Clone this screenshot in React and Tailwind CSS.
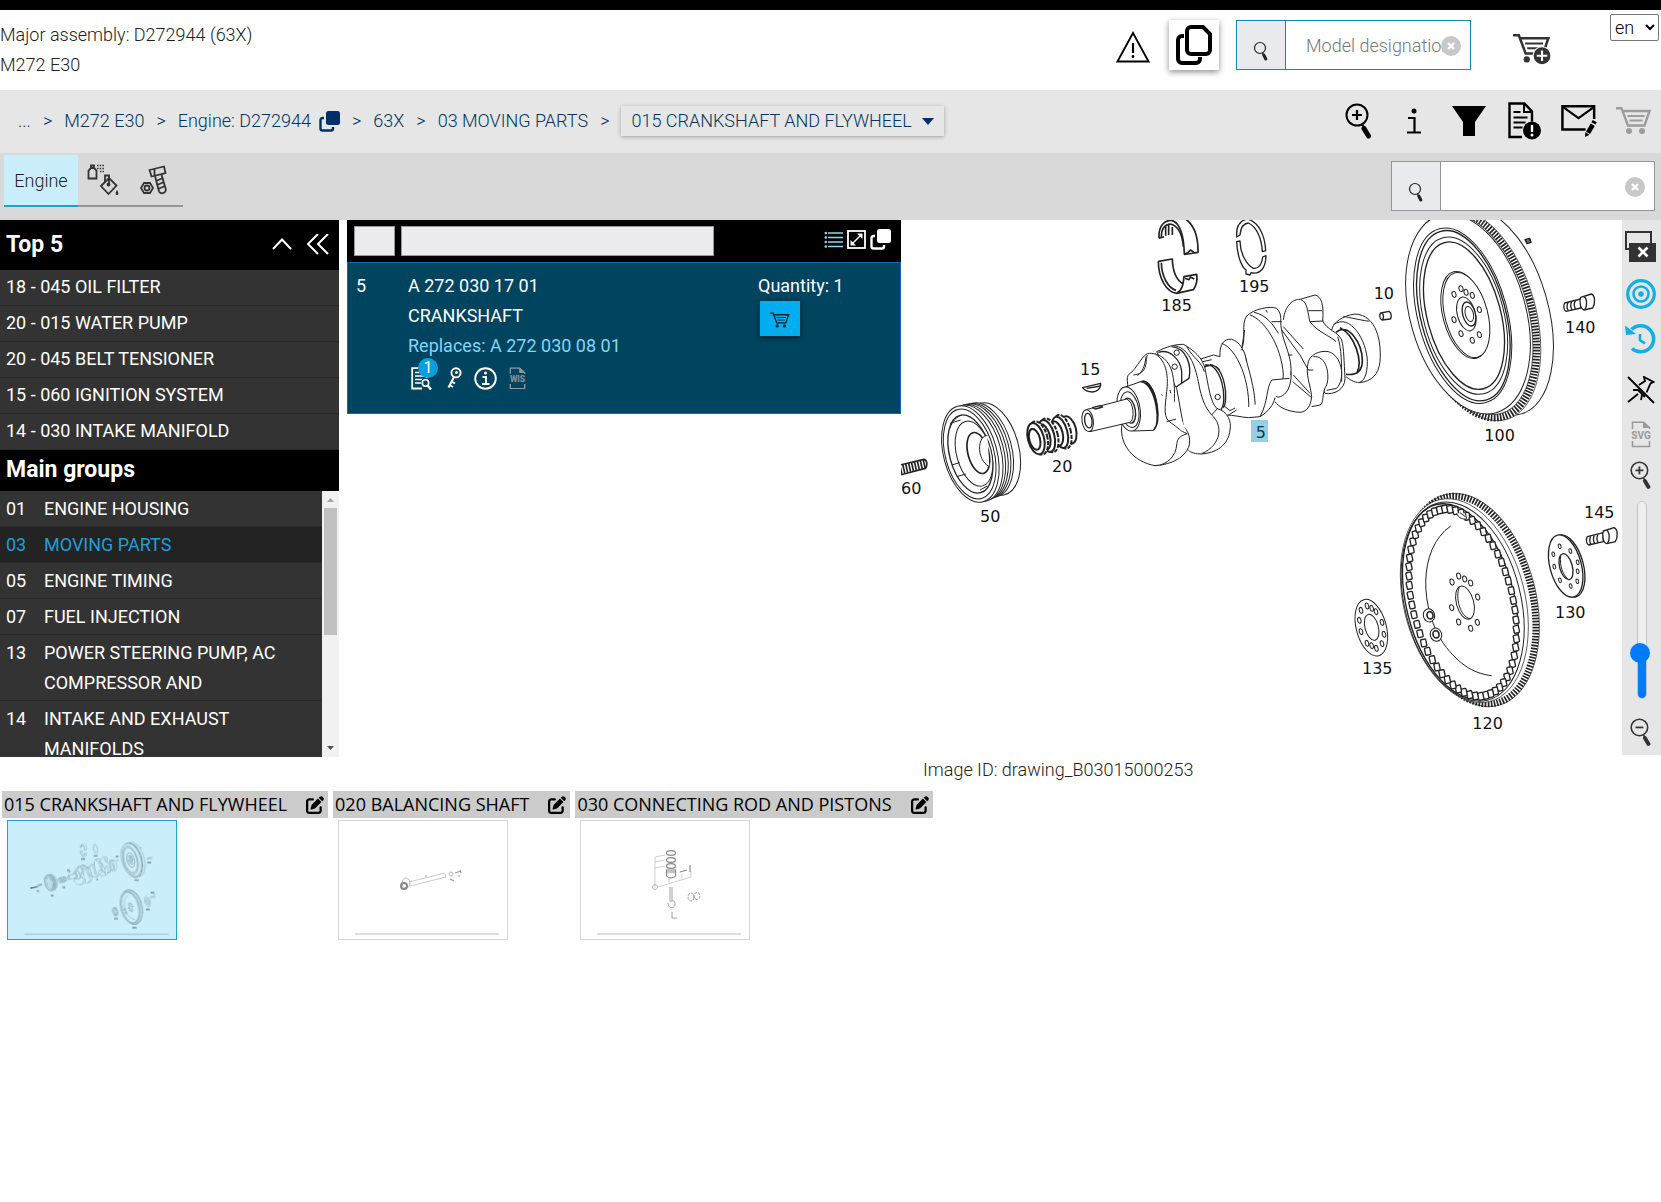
import React, { useState } from "react";
import { FaPenToSquare } from "react-icons/fa6";

const topFive = [
  "18 - 045 OIL FILTER",
  "20 - 015 WATER PUMP",
  "20 - 045 BELT TENSIONER",
  "15 - 060 IGNITION SYSTEM",
  "14 - 030 INTAKE MANIFOLD",
];

const mainGroups = [
  { code: "01", name: "ENGINE HOUSING" },
  { code: "03", name: "MOVING PARTS" },
  { code: "05", name: "ENGINE TIMING" },
  { code: "07", name: "FUEL INJECTION" },
  { code: "13", name: "POWER STEERING PUMP, AC COMPRESSOR AND" },
  { code: "14", name: "INTAKE AND EXHAUST MANIFOLDS" },
];

const callouts = [
  { no: "185", x: 781, y: 273 },
  { no: "195", x: 1014, y: 216 },
  { no: "15", x: 537, y: 464 },
  { no: "20", x: 453, y: 756 },
  { no: "60", x: 0, y: 823 },
  { no: "50", x: 237, y: 907 },
  { no: "10", x: 1418, y: 236 },
  { no: "140", x: 1992, y: 338 },
  { no: "100", x: 1750, y: 663 },
  { no: "145", x: 2049, y: 893 },
  { no: "130", x: 1962, y: 1195 },
  { no: "135", x: 1383, y: 1361 },
  { no: "120", x: 1714, y: 1526 },
];

/* ---------- Icons ---------- */

const SearchIcon = () => (
  <svg width="16" height="20" viewBox="0 0 16 20" fill="none" stroke="#222">
    <circle cx="7" cy="7" r="5.5" strokeWidth="1.2" />
    <path d="M9.5 12l1 2" strokeWidth="1.2" />
    <path d="M10.8 14l2 4" strokeWidth="3" strokeLinecap="round" />
  </svg>
);

const ZoomIcon = ({ minus, className }) => (
  <svg className={className} viewBox="0 0 28 36" fill="none" stroke="currentColor">
    <circle cx="12" cy="12" r="10.5" strokeWidth="2" />
    <path d={minus ? "M7 12h10" : "M7 12h10M12 7v10"} strokeWidth="2.2" />
    <path d="M17 21l2 4" strokeWidth="2" />
    <path d="M19 25.500l4.500 7.500" strokeWidth="5" strokeLinecap="round" />
  </svg>
);

const WarningIcon = () => (
  <svg width="34" height="32" viewBox="0 0 34 32" fill="none" stroke="#000">
    <path d="M17 2L32.500 30.500H1.500Z" strokeWidth="1.8" />
    <path d="M17 12v10" strokeWidth="2.2" />
    <circle cx="17" cy="25.500" r="1.400" fill="#000" stroke="none" />
  </svg>
);

const PagesIcon = () => (
  <svg width="38" height="42" viewBox="0 0 38 42" fill="none" stroke="#000" strokeWidth="4">
    <path d="M16 3h12l7 7v16a4 4 0 0 1-4 4H16a4 4 0 0 1-4-4V7a4 4 0 0 1 4-4z" />
    <path d="M9 12H7a4 4 0 0 0-4 4v19a4 4 0 0 0 4 4h14a4 4 0 0 0 4-4v-2" />
  </svg>
);

const CloneIcon = () => (
  <svg width="21" height="21" viewBox="0 0 21 21" fill="none">
    <rect x="7" y="0" width="14" height="14" rx="2.500" fill="currentColor" />
    <path
      d="M5 7H3.500a2 2 0 0 0-2 2v8.500a2 2 0 0 0 2 2H12a2 2 0 0 0 2-2V16"
      stroke="currentColor"
      strokeWidth="2.400"
    />
  </svg>
);

const CartIcon = ({ className, children }) => (
  <svg className={className} viewBox="0 0 36 30" fill="none" stroke="currentColor">
    <path d="M0 2.200h5.500L12 19.500h16.500L33.500 5H7" strokeWidth="2.400" />
    <path d="M11.500 10h17M13.500 14.500h13" strokeWidth="2" />
    <circle cx="13" cy="25" r="3" fill="currentColor" stroke="none" />
    <circle cx="26" cy="25" r="3" fill="currentColor" stroke="none" />
    {children}
  </svg>
);

const FunnelIcon = () => (
  <svg width="34" height="30" viewBox="0 0 34 30">
    <path d="M0 0h34L23 16v14H11V16z" fill="#000" />
  </svg>
);

const DocAlertIcon = () => (
  <svg width="34" height="38" viewBox="0 0 34 38" fill="none" stroke="#000">
    <path d="M14 35H1.500V1.500h15l7.500 8v10" strokeWidth="2.400" />
    <path d="M16 1.500V10h8" strokeWidth="2" />
    <path d="M5.500 10h7M5.500 15.500h14M5.500 20.500h12M5.500 25.500h9" strokeWidth="2" />
    <circle cx="24" cy="28.500" r="9" fill="#000" stroke="none" />
    <path d="M24 23v7" stroke="#fff" strokeWidth="2.400" />
    <circle cx="24" cy="33" r="1.500" fill="#fff" stroke="none" />
  </svg>
);

const MailEditIcon = () => (
  <svg width="38" height="34" viewBox="0 0 38 34" fill="none" stroke="#000">
    <path d="M26 26H1.500V1.500h33.500V15" strokeWidth="2.600" />
    <path d="M2 2l16.500 12L35 2" strokeWidth="2.200" />
    <path d="M28.500 29.500l5-8.500" strokeWidth="5" />
    <path d="M34.300 19.500l1.300-2.300" strokeWidth="5" />
    <path d="M25.500 29l4.500 2.500-4.500 2.500z" fill="#000" stroke="none" />
  </svg>
);

const PaintIcon = () => (
  <svg width="32" height="32" viewBox="0 0 32 32" fill="none" stroke="#333" strokeWidth="1.800">
    <path d="M1.500 14.500V6.500L4 4h3l2.500 2.500v8z" />
    <path d="M4 4V1.500h3V4" />
    <path d="M10 1.500h7M10 4.500h7M13 7.500h4" strokeDasharray="1.500 1.200" strokeWidth="1.500" />
    <path d="M14 22l8-8 7.500 7.500-8 8.500z" />
    <path d="M18 18.500v-7h4v10" />
    <circle cx="21.500" cy="20.500" r="1" fill="#333" />
    <path d="M30 26c-2 3-1.500 5 0 5s2-2 0-5z" fill="#333" stroke="none" />
  </svg>
);

const BoltIcon = () => (
  <svg width="28" height="30" viewBox="0 0 28 30" fill="none" stroke="#333" strokeWidth="1.800">
    <path d="M4 18h6l3 5-3 5H4l-3-5z" />
    <circle cx="7" cy="23" r="2.500" />
    <path d="M9.500 5L24 1.500 25.500 8 11.500 11.500z" />
    <path d="M14.500 4v6M15 11l4 15.500M21.500 9.500l4.500 15.500" />
    <path d="M16 16l7-3M17 20l7-3M18 24l7-3M19 26.500c2 3 6 2 7-1.500" />
  </svg>
);

const ListIcon = () => (
  <svg width="19" height="18" viewBox="0 0 19 18" stroke="#8fd8ef" fill="#8fd8ef">
    {[2, 6.5, 11, 15.5].map((y) => (
      <g key={y}>
        <circle cx="1.800" cy={y} r="1.300" stroke="none" />
        <path d={`M4 ${y}h15`} strokeWidth="1.500" />
      </g>
    ))}
  </svg>
);

const ExpandIcon = () => (
  <svg width="19" height="19" viewBox="0 0 19 19" fill="none" stroke="#fff">
    <rect x="1" y="1" width="17" height="17" strokeWidth="1.800" />
    <path d="M5 14l9-9" strokeWidth="1.500" />
    <path d="M10 3.500h5.500V9zM3.500 10v5.500H9z" fill="#fff" stroke="none" />
  </svg>
);

const NoteSearchIcon = () => (
  <svg width="21" height="23" viewBox="0 0 21 23" fill="none" stroke="#fff">
    <path d="M11 21.500H1.200V1.200h14.600v10" strokeWidth="1.800" />
    <path d="M4 5.500h9M4 9h9M4 12.500h7M4 16h6" strokeWidth="1.500" />
    <circle cx="14.500" cy="16" r="3.200" strokeWidth="1.600" />
    <path d="M16.500 18.500l3.500 4" strokeWidth="2.400" />
  </svg>
);

const KeyIcon = () => (
  <svg width="16" height="22" viewBox="0 0 16 22" fill="none" stroke="#fff">
    <circle cx="10" cy="5.800" r="4.600" strokeWidth="1.900" />
    <circle cx="10.500" cy="5.500" r="1.500" fill="#fff" stroke="none" />
    <path d="M8 10L2.500 20.500M5.500 14.500l3.500 2M3.500 18l3.500 2" strokeWidth="2" />
  </svg>
);

const InfoIcon = () => (
  <svg width="23" height="23" viewBox="0 0 23 23" fill="none" stroke="#fff">
    <circle cx="11.500" cy="11.500" r="10.300" strokeWidth="1.900" />
    <path d="M8.500 10h3.500v6.500M8 17h7.500" strokeWidth="1.900" />
    <circle cx="11.500" cy="6" r="1.500" fill="#fff" stroke="none" />
  </svg>
);

const FileTagIcon = ({ tag, className }) => (
  <svg className={className} viewBox="0 0 20 27" fill="none" stroke="currentColor">
    <path d="M1.500 8V1.200h11l6 5.500V8M1.500 20v5.500h17V20" strokeWidth="1.500" />
    <path d="M12.500 1.500v5h5.500z" fill="currentColor" strokeWidth="1" />
    <text
      x="10"
      y="18"
      fontSize="10"
      fontWeight="700"
      textAnchor="middle"
      fill="currentColor"
      stroke="none"
    >
      {tag}
    </text>
  </svg>
);

const CloseWindowIcon = () => (
  <svg width="31" height="31" viewBox="0 0 31 31" fill="none">
    <rect x="1" y="1" width="25" height="17" stroke="#333" strokeWidth="2" />
    <rect x="4" y="12" width="27" height="19" fill="#333" />
    <path d="M13.500 16.500l9 9M22.500 16.500l-9 9" stroke="#fff" strokeWidth="2.600" />
  </svg>
);

const TargetIcon = () => (
  <svg width="30" height="30" viewBox="0 0 30 30" fill="none" stroke="#12aee8">
    <circle cx="15" cy="15" r="13.300" strokeWidth="3.200" />
    <circle cx="15" cy="15" r="7.500" strokeWidth="2.600" />
    <circle cx="15" cy="15" r="2.800" fill="#12aee8" stroke="none" />
  </svg>
);

const HistoryIcon = () => (
  <svg width="31" height="31" viewBox="0 0 31 31" fill="none" stroke="#12aee8">
    <path d="M6.500 6.500A13 13 0 1 1 7 25.500" strokeWidth="3.600" />
    <path d="M0 2.500L1 12l10-1z" fill="#12aee8" stroke="none" />
    <path d="M15 11v6l5 3.500" strokeWidth="2.600" />
  </svg>
);

const UnpinIcon = () => (
  <svg width="28" height="28" viewBox="0 0 28 28" fill="none" stroke="#000" strokeWidth="1.800">
    <path d="M1 1l26 26M1 26l10-8M6 14h5l7 7M14 24l1-5M12 9l6-4-1-4 9.500 5-3 1.500-4 9" />
  </svg>
);

/* ---------- Exploded view ---------- */

// Places small shapes around a tilted ellipse
const around = (count, cx, cy, rx, ry, tilt) =>
  Array.from({ length: count }, (_, i) => {
    const t = (i / count) * Math.PI * 2;
    const r = (tilt * Math.PI) / 180;
    const ex = rx * Math.cos(t);
    const ey = ry * Math.sin(t);
    return {
      x: Math.round(cx + ex * Math.cos(r) - ey * Math.sin(r)),
      y: Math.round(cy + ex * Math.sin(r) + ey * Math.cos(r)),
    };
  });

const Oval = ({ cx, cy, rx, ry, tilt = -15, ...rest }) => (
  <ellipse cx={cx} cy={cy} rx={rx} ry={ry} transform={`rotate(${tilt} ${cx} ${cy})`} {...rest} />
);

const Holes = ({ points, rx = 6, ry = 9 }) =>
  points.map(([x, y]) => <Oval key={`${x}-${y}`} cx={x} cy={y} rx={rx} ry={ry} />);

const Bolt = ({ x, y }) => (
  <g transform={`translate(${x} ${y})`} strokeWidth="4">
    <path d="M4 27L52 15V42L8 52C0 48 0 34 4 27z" />
    <path d="M14 26c-4 8-4 16 1 24M25 23c-4 8-4 16 1 24M36 20c-4 8-4 18 1 25" />
    <path d="M52 10L84 0c12 4 12 30 4 42L62 48C50 44 48 20 52 10z" />
    <path d="M62 8c10 6 10 30 2 40" />
  </g>
);

const CrankParts = () => (
  <g transform="translate(-3 -15)">
    {/* bearing shells */}
    <g strokeWidth="5">
      <path d="M777 70C775 30 795 15 815 16C845 25 852 75 853 118L894 112C895 60 880 25 850 8" />
      <path d="M784 66C784 40 795 28 812 27C840 35 848 70 850 95M777 70l15-5M797 62V32M806 60V30M817 60V36M853 118l12-6 6-7 10 6" />
      <path d="M775 139l42-7C818 165 828 195 850 207M775 139C775 190 800 232 830 235L880 224C890 210 893 195 890 178L852 185C850 205 848 225 830 235" />
      <path d="M784 143C785 185 805 220 828 226M855 190l12 4 4-8 12 6" />
    </g>
    {/* thrust washer */}
    <g strokeWidth="4">
      <path d="M1010 66C1008 35 1020 16 1042 12C1075 20 1095 60 1097 107l-10 3C1085 70 1070 35 1045 24C1030 25 1022 40 1020 60z" />
      <path d="M1010 80C1012 125 1025 155 1038 165v12l12 3 3-7C1080 180 1097 160 1098 122l-10 4C1085 150 1075 162 1060 160C1040 150 1020 115 1020 78z" />
    </g>
    {/* woodruff key */}
    <path d="M548 518L602 505C603 522 590 530 577 531C562 531 553 525 548 518zM560 520l42-7" strokeWidth="4" />
    {/* stud */}
    <path d="M0 750L72 733C82 735 83 752 76 760L0 780" strokeWidth="5" />
    <path d="M0 764L78 746" strokeWidth="26" strokeDasharray="5 4" />
    {/* belt pulley */}
    <g>
      <Oval cx={277} cy={702} rx={79} ry={142} />
      <Oval cx={253} cy={705} rx={82} ry={145} />
      <Oval cx={245} cy={707} rx={82} ry={145} />
      <Oval cx={237} cy={709} rx={82} ry={146} />
      <Oval cx={229} cy={712} rx={82} ry={147} />
      <Oval cx={221} cy={715} rx={82} ry={148} />
      <Oval cx={211} cy={717} rx={80} ry={148} />
      <Oval cx={209} cy={717} rx={73} ry={138} />
      <Oval cx={211} cy={717} rx={62} ry={120} strokeWidth="4" />
      <Oval cx={222} cy={716} rx={52} ry={100} />
      <Oval cx={235} cy={714} rx={31} ry={63} strokeWidth="5" />
      <path d="M262 662C232 660 228 735 268 755" />
      <path d="M150 625l32-10M155 750l24-7M170 785l28-8M240 825l22-12M150 640C155 620 170 605 186 600" />
    </g>
    {/* chain sprocket */}
    <g strokeWidth="6">
      <Oval cx={506} cy={645} rx={22} ry={42} />
      <Oval cx={488} cy={650} rx={24} ry={52} strokeDasharray="12 4" />
      <Oval cx={480} cy={652} rx={22} ry={48} />
      <Oval cx={468} cy={656} rx={20} ry={38} />
      <Oval cx={448} cy={661} rx={25} ry={52} strokeDasharray="12 4" />
      <Oval cx={440} cy={663} rx={23} ry={49} />
      <Oval cx={430} cy={666} rx={20} ry={40} />
      <Oval cx={416} cy={669} rx={26} ry={51} strokeDasharray="12 4" />
      <Oval cx={408} cy={671} rx={24} ry={48} />
      <Oval cx={404} cy={673} rx={16} ry={32} />
    </g>
    {/* crankshaft, webs from the rear to the nose */}
    <g>
      <path d="M1295 345C1300 320 1330 302 1365 297C1430 300 1445 380 1440 440C1435 480 1415 498 1380 503C1360 503 1345 490 1338 485" />
      <path d="M1300 330C1350 290 1402 380 1402 440C1402 480 1392 500 1375 503M1330 304C1370 312 1405 320 1408 318" />
      <path d="M1308 352C1345 320 1386 385 1387 435C1387 465 1375 482 1338 478M1320 338C1365 360 1390 440 1370 475" strokeWidth="5" />
      <path d="M1150 315C1155 270 1180 252 1200 253L1245 240C1265 245 1272 270 1268 318C1280 345 1315 350 1325 375C1332 400 1332 440 1335 490C1335 525 1300 540 1275 535L1270 525" />
      <path d="M1203 254C1225 262 1223 300 1230 320C1250 350 1295 365 1308 380M1225 287h42M1230 320l40-2M1313 365C1325 400 1325 450 1325 500" />
      <path d="M1225 440C1230 420 1260 405 1285 410C1325 420 1338 490 1310 520L1280 526M1240 425C1280 420 1290 480 1280 510C1265 530 1272 570 1260 570L1235 575" />
      <path d="M1225 440C1215 480 1232 510 1235 545C1232 575 1220 590 1200 592C1160 590 1135 575 1125 560M1145 345L1200 420L1225 465h15M1150 335L1210 402M1180 480L1230 535M1178 500L1235 548" />
      <path d="M1025 403C1040 365 1022 330 1040 303C1070 295 1125 340 1150 410C1178 460 1178 490 1165 522C1150 550 1128 550 1125 540" />
      <path d="M1040 303C1060 282 1110 272 1130 280C1150 300 1138 320 1145 345C1148 380 1180 430 1172 480M1050 300C1090 312 1145 390 1150 480C1148 515 1135 525 1125 535" />
      <path d="M1062 292C1100 300 1120 330 1135 355M1098 285l4 8M1115 320h30M1165 420h12M1034 345l-8 50" />
      <path d="M960 425C958 390 970 370 995 373C1020 380 1032 405 1040 440C1060 510 1070 560 1064 605M965 385C1010 400 1055 500 1045 606" />
      <path d="M1022 405C1030 400 1035 415 1040 440M978 600C1000 600 1020 606 1045 608L1080 605C1105 590 1120 570 1125 548M1080 605C1105 560 1098 520 1115 495L1168 490" />
      <path d="M896 434L940 420L960 425M900 442l35-8M975 575l15 12 15-8M985 600l25-15" />
      <path d="M915 450C965 440 985 560 962 585M930 448C978 455 985 560 970 578M895 470C920 445 950 445 960 470" strokeWidth="4" />
      <circle cx="953" cy="546" r="8" />
      <path d="M850 388C882 405 908 430 915 460C925 510 930 560 950 580C985 590 995 620 990 645C985 690 950 715 900 717C880 716 868 710 863 703L830 520L770 410C800 395 825 388 850 388z" />
      <path d="M820 392C865 395 885 450 895 500C905 555 915 575 935 600C970 630 965 690 905 716M860 395C880 430 905 440 913 470M935 600l18-20" />
      <path d="M775 412C810 400 842 435 845 470V503M815 395C860 400 875 450 867 490L828 516" strokeWidth="4" />
      <circle cx="830" cy="413" r="8" />
      <circle cx="824" cy="455" r="8" />
      <path d="M683 508C678 470 690 482 705 460C730 425 735 413 755 415C795 420 815 450 820 490C828 530 818 570 828 612C850 635 874 648 868 690C855 735 800 750 765 752C700 740 660 690 665 635z" />
      <path d="M765 416C803 440 805 490 800 530C795 580 788 610 815 625C850 650 835 645 862 656M700 480C745 475 735 445 742 420M712 482C735 465 735 440 738 425M862 656C830 665 832 680 830 690C828 720 805 750 765 752M800 620l28-8M785 538l2 4M810 525l2 10" />
      <Oval cx={738} cy={572} rx={32} ry={74} tilt={-8} strokeWidth="5" />
      <path d="M665 520L722 500C770 505 785 640 758 646L700 648z" />
      <path d="M722 500C770 505 785 640 758 646M735 503C775 520 785 630 762 640" strokeWidth="4" />
      <Oval cx={686} cy={582} rx={34} ry={67} tilt={-10} />
      <Oval cx={689} cy={584} rx={27} ry={54} tilt={-10} />
      <Oval cx={688} cy={587} rx={18} ry={38} tilt={-10} strokeWidth="4" />
      <path d="M558 584L680 552C702 560 705 615 690 622L570 650z" />
      <Oval cx={563} cy={617} rx={17} ry={33} tilt={-8} />
      <Oval cx={565} cy={617} rx={11} ry={22} tilt={-8} strokeWidth="4" />
      <path d="M578 578l22-6 8 4-22 6z" strokeWidth="4" />
    </g>
    {/* dowel and bolts */}
    <path d="M1442 294l25-5c8 4 8 18 4 23l-25 3c-8-3-8-16-4-21zM1446 294c6 5 6 16 0 21" strokeWidth="4" />
    <Bolt x={1990} y={237} />
    <Bolt x={2058} y={938} />
    {/* flywheel with ring gear */}
    <g>
      <Oval cx={1776} cy={289} rx={168} ry={320} tilt={-16} />
      <path d="M1875 74l14-4 4 12-12 4zM1881 72v12M1887 71v12" strokeWidth="4" />
      <Oval cx={1730} cy={300} rx={177} ry={326} tilt={-16} strokeWidth="2" />
      <Oval cx={1723} cy={300} rx={170} ry={316} tilt={-16} strokeWidth="24" strokeDasharray="5 4" />
      <Oval cx={1719} cy={299} rx={165} ry={308} tilt={-16} strokeWidth="2" />
      <Oval cx={1704} cy={297} rx={173} ry={308} tilt={-16} />
      <Oval cx={1688} cy={302} rx={134} ry={270} />
      <Oval cx={1690} cy={302} rx={127} ry={262} strokeWidth="4" />
      <Oval cx={1691} cy={302} rx={120} ry={242} />
      <Oval cx={1692} cy={302} rx={110} ry={227} strokeWidth="4" />
      <Oval cx={1695} cy={300} rx={66} ry={134} />
      <Oval cx={1699} cy={300} rx={64} ry={131} />
      <Oval cx={1699} cy={297} rx={27} ry={52} />
      <Oval cx={1707} cy={297} rx={19} ry={37} strokeWidth="4" />
      <Oval cx={1708} cy={297} rx={12} ry={23} />
      <Holes
        points={[
          [1662, 238],
          [1683, 221],
          [1698, 232],
          [1717, 241],
          [1738, 284],
          [1662, 314],
          [1683, 356],
          [1717, 376],
          [1738, 359],
        ]}
      />
    </g>
    {/* drive plate */}
    <g transform="translate(1200 765)">
      <Oval cx={516} cy={390} rx={192} ry={326} tilt={-14} strokeWidth="2" />
      <Oval cx={513} cy={390} rx={184} ry={318} tilt={-14} strokeWidth="20" strokeDasharray="5 4" />
      <Oval cx={493} cy={392} rx={182} ry={312} tilt={-14} strokeWidth="2" />
      <Oval cx={488} cy={395} rx={174} ry={305} tilt={-14} />
      <Oval cx={481} cy={395} rx={162} ry={300} tilt={-14} strokeWidth="4" />
      {around(60, 488, 398, 150, 287, -14).map((p, i) => (
        <rect
          key={i}
          x={p.x - 8}
          y={p.y - 11}
          width="16"
          height="22"
          rx="3"
          strokeWidth="4"
          transform={`rotate(-12 ${p.x} ${p.y})`}
        />
      ))}
      <path d="M452 168C350 240 362 420 430 520C480 590 530 612 575 617" fill="none" />
      <path d="M470 130c4 14 22 20 30 16l-4-16M480 128l16 12" />
      <Oval cx={495} cy={398} rx={26} ry={51} />
      <path d="M478 352C465 380 480 440 510 446" />
      <Holes
        points={[
          [456, 336],
          [476, 318],
          [494, 327],
          [512, 339],
          [533, 381],
          [455, 413],
          [476, 456],
          [512, 475],
          [532, 457],
        ]}
      />
      <Oval cx={387} cy={436} rx={17} ry={20} />
      <Oval cx={390} cy={436} rx={9} ry={11} strokeWidth="5" />
      <Oval cx={408} cy={494} rx={17} ry={20} />
      <Oval cx={408} cy={493} rx={9} ry={11} strokeWidth="5" />
      {/* spacer plates */}
      <Oval cx={803} cy={288} rx={47} ry={96} strokeWidth="4" />
      <Oval cx={797} cy={288} rx={47} ry={96} strokeWidth="4" />
      <Oval cx={798} cy={290} rx={19} ry={40} strokeWidth="4" />
      <path d="M782 256C778 290 790 315 803 326" />
      <Holes
        rx={4}
        ry={7}
        points={[
          [779, 229],
          [811, 243],
          [760, 253],
          [763, 290],
          [833, 277],
          [833, 304],
          [832, 334],
          [780, 331],
          [812, 348],
        ]}
      />
      <Oval cx={214} cy={473} rx={45} ry={87} />
      <Oval cx={215} cy={472} rx={20} ry={40} />
      <Holes
        rx={5}
        ry={9}
        points={[
          [201, 408],
          [183, 421],
          [215, 415],
          [228, 425],
          [246, 457],
          [252, 493],
          [246, 521],
          [178, 451],
          [183, 485],
          [201, 520],
          [215, 527],
          [229, 535],
        ]}
      />
    </g>
  </g>
);

const PartsDrawing = () => (
  <svg
    className="block min-w-0 flex-1 self-start"
    viewBox="0 0 2163 1605"
    role="img"
    aria-label="Crankshaft and flywheel"
  >
    <g fill="#fff" stroke="#222" strokeWidth="3" strokeLinejoin="round">
      <CrankParts />
    </g>
    <g className="font-['DejaVu_Sans',sans-serif]" fontSize="48" fill="#111">
      <rect x="1050" y="600" width="51" height="66" fill="#95cfe2" />
      <text x="1064" y="655" fill="#0b3a4d">
        5
      </text>
      {callouts.map((c) => (
        <text key={c.no} x={c.x} y={c.y}>
          {c.no}
        </text>
      ))}
    </g>
  </svg>
);

/* ---------- Thumbnails ---------- */

const CrankThumb = () => (
  <svg className="block" viewBox="-539 -424 3055 2145">
    <g fill="#cdeffc" stroke="#47616c" strokeWidth="6" opacity="0.8">
      <CrankParts />
      <path d="M-120 795l120-25M-120 775v40" strokeWidth="24" />
    </g>
    {/* position numbers, too small to read at this size */}
    <path
      d="M-20 850h50M240 930h50M450 780h50M535 470h50M790 265h70M1020 210h70M1070 640h30M1420 220h50M1760 650h80M1995 330h70M1390 1350h70M1720 1515h80M1970 1185h70M2055 880h70"
      stroke="#7d9aa5"
      strokeWidth="30"
    />
    <path d="M-240 1635H2380" stroke="#8fb0bc" strokeWidth="14" />
  </svg>
);

const ShaftThumb = () => (
  <svg className="block" viewBox="0 0 168 118" fill="none" stroke="#bbb">
    <ellipse cx="67" cy="62" rx="4" ry="5" />
    <circle cx="65" cy="65" r="3" stroke="#888" strokeWidth="2" />
    <path d="M70 61l36-9M71 65l36-9M106 53l1 3" strokeWidth="0.800" />
    <circle cx="112" cy="53" r="2" />
    <path d="M116 52l6-2M111 58l4 2M86 55h2M119 55h2M121 49l1 3" stroke="#999" strokeWidth="1.200" />
    <path d="M16 113h144" />
  </svg>
);

const PistonThumb = () => (
  <svg className="block" viewBox="0 0 168 118" fill="none" stroke="#bbb">
    <path d="M74 67V36l10-2M74 41l10-2M74 47l10-2M77 66l33-10v-6M88 62v-5M101 58v-5" strokeWidth="0.700" />
    <circle cx="74" cy="66" r="2.500" />
    <g stroke="#888" strokeWidth="1.200">
      <ellipse cx="90" cy="32" rx="4.500" ry="2.300" />
      <ellipse cx="90" cy="39" rx="4.500" ry="2.300" />
      <ellipse cx="90" cy="45" rx="4.500" ry="2.300" />
      <path d="M85.500 49h9v6c-2 2.500-7 2.500-9 0zM85.500 51h9" />
      <path d="M99 51l7-2M109 44v7" />
      <path d="M89 66v14M91 66v14M87 82c0 6 7 6 7 1s-3-3-5-2M91 91v6h5" strokeWidth="0.800" />
      <ellipse cx="110" cy="76" rx="3" ry="4" strokeWidth="0.800" strokeDasharray="3 1" />
      <ellipse cx="116" cy="75" rx="3" ry="3.500" strokeWidth="0.800" strokeDasharray="3 1" />
    </g>
    <path d="M16 113h144" />
  </svg>
);

const thumbs = [
  { title: "015 CRANKSHAFT AND FLYWHEEL", Picture: CrankThumb },
  { title: "020 BALANCING SHAFT", Picture: ShaftThumb },
  { title: "030 CONNECTING ROD AND PISTONS", Picture: PistonThumb },
];

/* ---------- Page blocks ---------- */

const SearchBox = ({ label, placeholder, className, dividerClass }) => {
  const [value, setValue] = useState("");

  return (
    <div className={`relative flex h-[50px] border bg-white ${className}`}>
      <button
        type="button"
        aria-label={`Start ${label}`}
        className={`flex w-[49px] shrink-0 items-center justify-center border-r bg-[#e8eaee] pt-3 ${dividerClass}`}
      >
        <SearchIcon />
      </button>
      <input
        type="text"
        aria-label={label}
        value={value}
        onChange={(e) => setValue(e.target.value)}
        placeholder={placeholder}
        className="min-w-0 flex-1 pr-6 pl-5 font-light text-[#333] placeholder:text-[#75797c] focus:outline-none"
      />
      <button
        type="button"
        aria-label={`Clear ${label}`}
        onClick={() => setValue("")}
        className="absolute top-[15px] right-[9px] flex size-5 items-center justify-center rounded-full bg-[#c8c8c8]"
      >
        <svg width="8" height="8" viewBox="0 0 8 8" stroke="#fff" strokeWidth="2.400">
          <path d="M1 1l6 6M7 1l-6 6" />
        </svg>
      </button>
    </div>
  );
};

const Header = () => (
  <header className="flex items-start justify-between border-t-[10px] border-black bg-white pr-[2px] pb-[10px]">
    <div className="pt-[10px] leading-[30px] font-light text-[#222]">
      <p>Major assembly: D272944 (63X)</p>
      <p>M272 E30</p>
    </div>
    <div className="flex items-start gap-[59px]">
      <div className="flex items-center pt-[10px]">
        <button type="button" aria-label="Warnings" className="pt-1">
          <WarningIcon />
        </button>
        <button
          type="button"
          aria-label="Copy"
          className="ml-[19px] flex size-[50px] items-center justify-center bg-white shadow-[0_2px_6px_rgba(0,0,0,0.45)]"
        >
          <PagesIcon />
        </button>
        <SearchBox
          label="model search"
          placeholder="Model designation"
          className="ml-[17px] w-[235px] border-[#118bad]"
          dividerClass="border-[#118bad]"
        />
        <button type="button" aria-label="New cart" className="ml-[42px] pt-2 text-[#333]">
          <CartIcon className="w-[38px]">
            <circle cx="27.500" cy="21.500" r="8.500" fill="#333" stroke="#fff" strokeWidth="1" />
            <path d="M22.500 21.500h10M27.500 16.500v10" stroke="#fff" strokeWidth="2" />
          </CartIcon>
        </button>
      </div>
      <select
        aria-label="Language"
        className="mt-1 h-[27px] w-[49px] rounded-[2px] border border-[#767676] bg-white font-light text-black"
      >
        <option>en</option>
      </select>
    </div>
  </header>
);

const Breadcrumbs = () => (
  <div className="flex items-center justify-between bg-[#e6e6e6] pt-4 pr-[9px] pb-[17px] pl-[18px]">
    <nav className="flex items-center gap-3 leading-[30px] font-light text-[#00355f]">
      <a href="#all">...</a>
      <span>&gt;</span>
      <a href="#model">M272 E30</a>
      <span>&gt;</span>
      <span className="flex items-center gap-2">
        <a href="#engine">Engine: D272944</a>
        <button type="button" aria-label="Copy engine number" className="text-[#00306a]">
          <CloneIcon />
        </button>
      </span>
      <span>&gt;</span>
      <a href="#variant">63X</a>
      <span>&gt;</span>
      <a href="#group">03 MOVING PARTS</a>
      <span>&gt;</span>
      <button
        type="button"
        className="flex items-center gap-[10px] px-[10px] font-light shadow-[0_1px_4px_rgba(0,0,0,0.3)]"
      >
        015 CRANKSHAFT AND FLYWHEEL
        <svg width="12" height="7" viewBox="0 0 12 7">
          <path d="M0 0h12L6 7z" fill="#00306a" />
        </svg>
      </button>
    </nav>
    <div className="flex h-[30px] items-center gap-[19px]">
      <button type="button" aria-label="Zoom" className="flex w-9 justify-center text-black">
        <ZoomIcon className="w-7" />
      </button>
      <button type="button" aria-label="Information" className="flex w-9 justify-center">
        <svg width="14" height="26" viewBox="0 0 14 26" fill="none" stroke="#000" strokeWidth="2.200">
          <path d="M1 10h6.500v14M0 24.500h14" />
          <circle cx="7" cy="3" r="2.500" fill="#000" stroke="none" />
        </svg>
      </button>
      <button type="button" aria-label="Filter" className="flex w-9 justify-center">
        <FunnelIcon />
      </button>
      <button type="button" aria-label="Notes" className="flex w-9 justify-end">
        <DocAlertIcon />
      </button>
      <button type="button" aria-label="Write message" className="flex w-9 justify-center">
        <MailEditIcon />
      </button>
      <button type="button" aria-label="Cart" className="flex w-9 justify-center text-[#9c9c9c]">
        <CartIcon className="w-9" />
      </button>
    </div>
  </div>
);

const TabBar = () => (
  <div className="flex items-start justify-between bg-[#d9d9d9] pr-[6px] pl-1">
    <div className="flex h-[54px] items-stretch pt-[2px]">
      <button
        type="button"
        className="w-[74px] border-b-2 border-[#1ea3cf] bg-[#cbeefd] font-light text-[#222]"
      >
        Engine
      </button>
      <button
        type="button"
        aria-label="Paint and fluids"
        className="flex w-[50px] items-center justify-center border-b-2 border-[#959595]"
      >
        <PaintIcon />
      </button>
      <button
        type="button"
        aria-label="Standard parts"
        className="flex w-[55px] items-center justify-start border-b-2 border-[#959595] pl-3"
      >
        <BoltIcon />
      </button>
    </div>
    <div className="pt-2 pb-[9px]">
      <SearchBox label="part search" className="w-[264px] border-[#959595]" dividerClass="border-[#959595]" />
    </div>
  </div>
);

const Sidebar = () => {
  const [active, setActive] = useState("03");

  return (
    <aside className="w-[339px] shrink-0 text-white">
      <div className="flex h-[50px] items-center justify-between bg-black pr-[10px] pl-[6px]">
        <h2 className="text-[23px] font-bold">Top 5</h2>
        <div className="flex gap-[14px]">
          <button type="button" aria-label="Collapse list">
            <svg width="20" height="22" viewBox="0 0 20 22" fill="none" stroke="#fff" strokeWidth="2">
              <path d="M1 15l9-9.500L19 15" />
            </svg>
          </button>
          <button type="button" aria-label="Hide sidebar">
            <svg width="23" height="22" viewBox="0 0 23 22" fill="none" stroke="#fff" strokeWidth="2">
              <path d="M12 0L2 10l10 10M22 0L12 10l10 10" />
            </svg>
          </button>
        </div>
      </div>
      <ul className="bg-[#333]">
        {topFive.map((item) => (
          <li key={item} className="border-b border-[#292929] pt-[2px] pb-[3px] pl-[6px] leading-[30px]">
            <a href="#top">{item}</a>
          </li>
        ))}
      </ul>
      <h2 className="flex h-[41px] items-center bg-black pl-[6px] text-[23px] font-bold">Main groups</h2>
      <div className="flex h-[266px]">
        <ul className="flex-1 overflow-hidden bg-[#333]">
          {mainGroups.map((group) => (
            <li key={group.code}>
              <button
                type="button"
                onClick={() => setActive(group.code)}
                className={`flex w-full border-b border-[#292929] pt-[3px] pr-8 pb-[2px] pl-[6px] text-left leading-[30px] ${
                  active === group.code ? "bg-[#232323] text-[#1e9fd6]" : ""
                }`}
              >
                <span className="w-[38px] shrink-0">{group.code}</span>
                <span>{group.name}</span>
              </button>
            </li>
          ))}
        </ul>
        <div className="flex w-[17px] flex-col items-center justify-between bg-[#f1f1f1]">
          <div className="flex w-full flex-col items-center">
            <svg className="h-[17px] w-[7px]" viewBox="0 0 7 17">
              <path d="M0 11h7L3.500 7z" fill="#a3a3a3" />
            </svg>
            <div className="h-[127px] w-[13px] bg-[#c1c1c1]" />
          </div>
          <svg className="h-[17px] w-[7px]" viewBox="0 0 7 17">
            <path d="M0 6h7l-3.500 4z" fill="#505050" />
          </svg>
        </div>
      </div>
    </aside>
  );
};

const PartsList = () => (
  <section className="ml-2 w-[554px] shrink-0">
    <div className="flex h-[42px] items-center gap-[6px] bg-black pr-[10px] pl-[7px]">
      <input type="text" aria-label="Filter by position" className="h-[30px] w-[41px] border border-[#999] bg-[#ececee]" />
      <input type="text" aria-label="Filter by part" className="h-[30px] w-[313px] border border-[#999] bg-[#ececee]" />
      <div className="ml-auto flex items-center gap-1 pb-[3px] text-white">
        <button type="button" aria-label="List view">
          <ListIcon />
        </button>
        <button type="button" aria-label="Expand">
          <ExpandIcon />
        </button>
        <button type="button" aria-label="Copy list">
          <CloneIcon />
        </button>
      </div>
    </div>
    <div className="flex h-[152px] border border-[#1268b3] bg-[#00445f] pt-2 pl-2 leading-[30px] text-white">
      <span className="w-[52px]">5</span>
      <div className="w-[350px]">
        <p>A 272 030 17 01</p>
        <p>CRANKSHAFT</p>
        <p className="text-[#83d5f5]">Replaces: A 272 030 08 01</p>
        <div className="flex h-[34px] items-center gap-3 pl-[3px]">
          <button type="button" aria-label="Notes" className="relative">
            <NoteSearchIcon />
            <span className="absolute -top-[9px] left-[7px] flex size-5 items-center justify-center rounded-full bg-[#0a9fdc] text-base text-white">
              1
            </span>
          </button>
          <button type="button" aria-label="Key" className="pl-[2px]">
            <KeyIcon />
          </button>
          <button type="button" aria-label="Details">
            <InfoIcon />
          </button>
          <button type="button" aria-label="WIS document" className="text-[#8d9ba3]">
            <FileTagIcon tag="WIS" className="w-[17px]" />
          </button>
        </div>
      </div>
      <div>
        <p>Quantity: 1</p>
        <button
          type="button"
          aria-label="Add to cart"
          className="ml-[2px] flex h-[35px] w-10 items-center justify-center bg-[#00adef] pt-1 text-[#0d2733] shadow-[0_2px_5px_rgba(0,0,0,0.5)]"
        >
          <CartIcon className="w-5" />
        </button>
      </div>
    </div>
  </section>
);

const DrawingTools = () => {
  const [zoom, setZoom] = useState(20);

  return (
    <div className="flex w-[39px] shrink-0 flex-col items-center bg-[#e6e6e6] pt-[11px] pr-[2px] pb-[9px] text-[#333]">
      <button type="button" aria-label="Close window">
        <CloseWindowIcon />
      </button>
      <button type="button" aria-label="Focus" className="mt-[17px]">
        <TargetIcon />
      </button>
      <button type="button" aria-label="History" className="mt-[14px]">
        <HistoryIcon />
      </button>
      <button type="button" aria-label="Unpin" className="mt-[22px]">
        <UnpinIcon />
      </button>
      <button type="button" aria-label="Export SVG" className="mt-[17px] text-[#999]">
        <FileTagIcon tag="SVG" className="w-5" />
      </button>
      <button type="button" aria-label="Zoom in" className="mt-[13px]">
        <ZoomIcon className="w-[22px]" />
      </button>
      <input
        type="range"
        aria-label="Zoom level"
        min="0"
        max="100"
        value={zoom}
        onChange={(e) => setZoom(Number(e.target.value))}
        style={{ backgroundImage: `linear-gradient(to top, #007aff ${zoom}%, #efefef ${zoom}%)` }}
        className="mt-3 ml-[2px] h-[198px] w-[10px] appearance-none rounded-full border border-[#c4c4c4] [direction:rtl] [writing-mode:vertical-lr] [&::-webkit-slider-thumb]:-ml-[3px] [&::-webkit-slider-thumb]:size-5 [&::-webkit-slider-thumb]:appearance-none [&::-webkit-slider-thumb]:rounded-full [&::-webkit-slider-thumb]:bg-[#007aff]"
      />
      <button type="button" aria-label="Zoom out" className="mt-auto">
        <ZoomIcon minus className="w-[22px]" />
      </button>
    </div>
  );
};

const App = () => {
  const [selected, setSelected] = useState(0);

  return (
    <div className="min-h-screen bg-white font-['Roboto',sans-serif] text-[18px]">
      <Header />
      <Breadcrumbs />
      <TabBar />

      <main className="flex items-start">
        <Sidebar />
        <PartsList />
        <section className="min-w-0 flex-1">
          <div className="flex">
            <PartsDrawing />
            <DrawingTools />
          </div>
          <p className="pl-[22px] leading-[30px] font-light text-[#222]">Image ID: drawing_B03015000253</p>
        </section>
      </main>

      <section className="flex gap-[5px] pt-[6px] pl-[2px]">
        {thumbs.map(({ title, Picture }, i) => (
          <div key={title}>
            <div className="flex h-[27px] items-center gap-[19px] bg-[#cbcbcb] pr-1 pl-[2px] font-['Open_Sans',sans-serif] text-black">
              <h3>{title}</h3>
              <button type="button" aria-label={`Edit ${title}`}>
                <FaPenToSquare size={18} />
              </button>
            </div>
            <button
              type="button"
              aria-label={title}
              onClick={() => setSelected(i)}
              className={`mt-[2px] ml-[5px] block h-[120px] w-[170px] border ${
                selected === i ? "border-[#1ea3cf] bg-[#cbeefd]" : "border-[#d8d8d8] bg-white"
              }`}
            >
              <Picture />
            </button>
          </div>
        ))}
      </section>
    </div>
  );
};

export default App;
